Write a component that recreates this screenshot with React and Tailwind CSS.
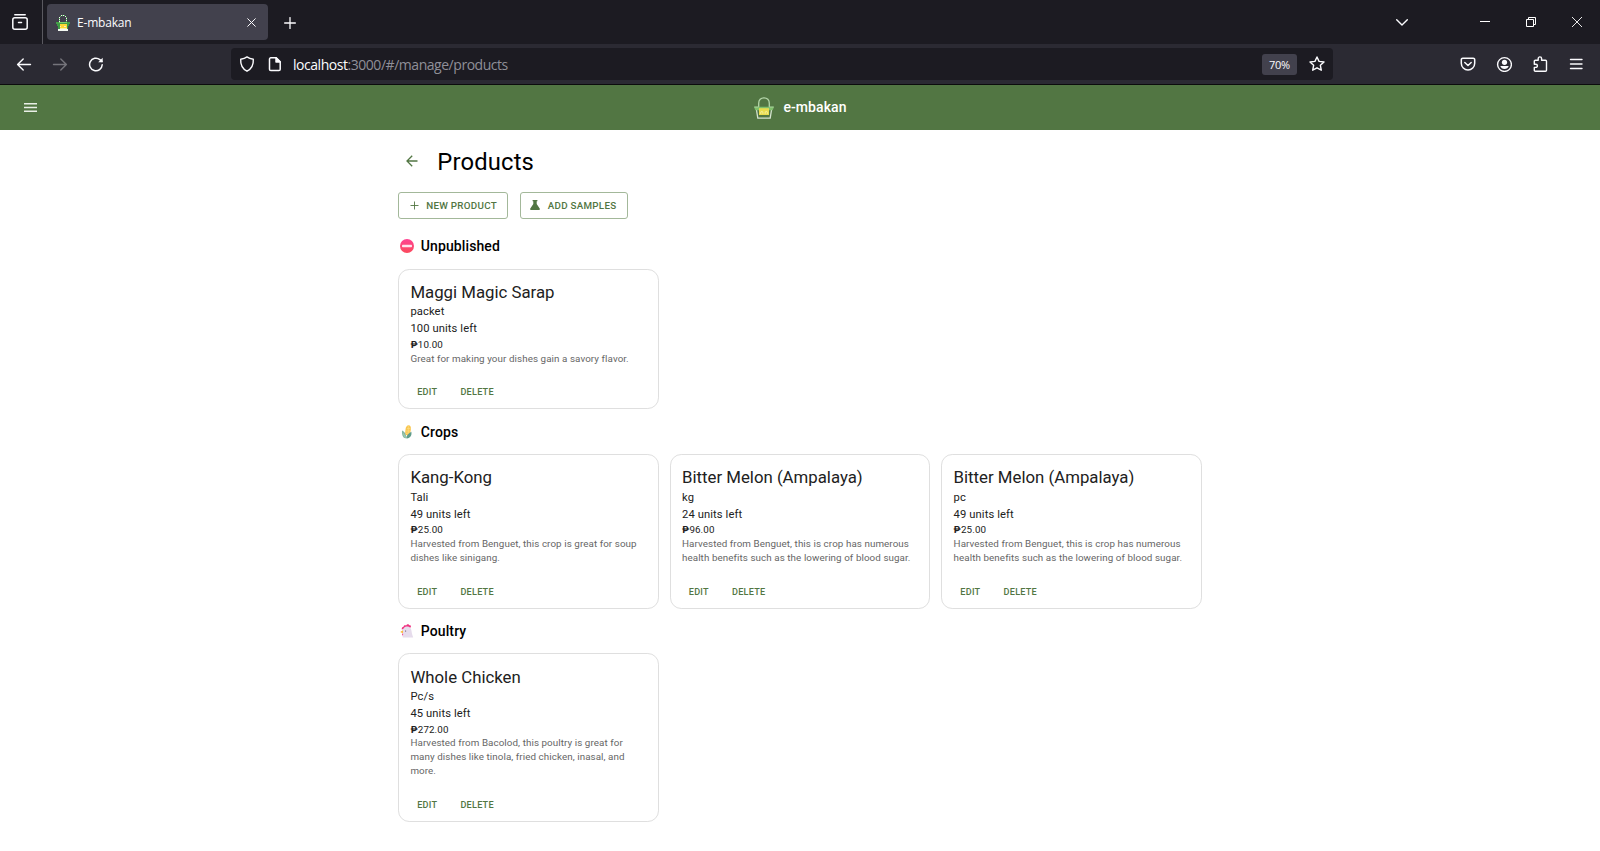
import React from "react";

const CHROME_FONT = "font-['Open_Sans','Noto_Sans',sans-serif]";

function Icon({ className = "size-4", children, strokeWidth = 1.4, viewBox = "0 0 16 16" }) {
  return (
    <svg
      className={`shrink-0 ${className}`}
      viewBox={viewBox}
      fill="none"
      stroke="currentColor"
      strokeWidth={strokeWidth}
      strokeLinecap="round"
      strokeLinejoin="round"
    >
      {children}
    </svg>
  );
}

function Favicon() {
  return (
    <svg className="h-[17px] w-4 shrink-0" viewBox="0 0 16 17" shapeRendering="crispEdges">
      <path
        d="M6 1h1v1H6zM8 1h1v1H8zM10 2h1v1h-1zM4 3h1v1H4zM11 4h1v1h-1zM4 5h1v1H4zM11 6h1v1h-1zM4 7h1v1H4z"
        fill="#f0f6ee"
      />
      <path
        d="M7 1h1v1H7zM9 1h1v1H9zM5 2h1v1H5zM11 3h1v1h-1zM4 4h1v1H4zM11 5h1v1h-1zM4 6h1v1H4zM11 7h1v1h-1z"
        fill="#4caf50"
      />
      <rect x="1" y="8" width="14" height="2" fill="#43a047" />
      <rect x="4" y="8" width="8" height="1" fill="#7ccf6d" />
      <rect x="2" y="10" width="12" height="2" fill="#3d9a44" />
      <rect x="3" y="12" width="10" height="3" fill="#3d9a44" />
      <rect x="5" y="10" width="7" height="4" fill="#fdd835" />
      <rect x="5" y="12" width="1" height="1" fill="#f6f1c0" />
      <rect x="9" y="12" width="2" height="1" fill="#f6f1c0" />
      <rect x="3" y="15" width="10" height="2" fill="#f4f8f2" />
      <rect x="5" y="14" width="7" height="1" fill="#fff59d" />
    </svg>
  );
}

function BasketLogo() {
  return (
    <svg className="h-[22px] w-5 shrink-0" viewBox="0 0 20 22" fill="none">
      <path d="M4.700 10V6.200C4.700 2.800 6.800.9 10 .9s5.300 1.900 5.300 5.300V10" stroke="#b5d6aa" strokeWidth="1.300" />
      <path d="M2.500 13 3.800 21.200h12.400L17.500 13" fill="#527643" stroke="#d5e3cf" strokeWidth="1.300" />
      <path d="M0 9.700h20l-1.300 3.500H1.300z" fill="#7fbf6c" />
      <path d="M.3 10h4.200M15.500 10h4.200" stroke="#b9dcae" strokeWidth=".8" />
      <rect x="5" y="11.200" width="10" height="6.800" fill="#e9dc4e" />
      <path d="M6.700 16.800v-1.200a1.100 1.100 0 0 1 2.200 0v1.200M11.200 16.800v-1.200a1.100 1.100 0 0 1 2.200 0v1.200" stroke="#f8f2b4" strokeWidth=".8" />
    </svg>
  );
}

function NoEntry() {
  return (
    <svg className="size-[14px]" viewBox="0 0 14 14">
      <defs>
        <linearGradient id="ne" x1="0" y1="0" x2="0" y2="1">
          <stop offset="0" stopColor="#ff4392" />
          <stop offset="1" stopColor="#fb4a5c" />
        </linearGradient>
      </defs>
      <circle cx="7" cy="7" r="7" fill="url(#ne)" />
      <rect x="2" y="5.700" width="10" height="2.600" rx=".8" fill="#ffe3ee" />
    </svg>
  );
}

function Corn() {
  return (
    <svg className="size-[14px]" viewBox="0 0 14 14">
      <path d="M5.500 4.500C5.600 2 7 .4 8.600.3c1.700 0 2.500 1.600 2.300 3.600-.2 2.600-1.100 5.600-2.700 6.900L5 9.500z" fill="#f9c650" />
      <path d="M7 3.500h3.500M6 6h4.300M6 8.300h3.600M8.300.6v8" stroke="#fde08c" strokeWidth=".6" />
      <path d="M2 5.400c2 .6 3.300 2.500 3.800 4.600L7 13.300C3.800 13.600 1.600 11.400 2 5.400z" fill="#84b7a4" />
      <path d="M11.300 6.800c.8 3.500-.8 6.400-4.500 6.600-1-2 1.500-5 4.500-6.600z" fill="#5f9c8b" />
      <path d="M3.500 8.500c.4 2 1.300 3.400 2.800 4.300" stroke="#b7d9b0" strokeWidth=".7" fill="none" />
    </svg>
  );
}

function Chicken() {
  return (
    <svg className="size-[14px]" viewBox="0 0 14 14">
      <path d="M1.800 5.500C1.500 3 2.900 2.800 3.400 3 3.500 1.100 5.300.7 6.100 1.600 7-.1 9-.1 9.300 1.300c1.500-.3 2 1 1.300 2.300L6 4.500z" fill="#f0307f" />
      <path d="M2.600 8C2.500 4.500 4.600 2.600 7.200 2.600c3 0 4.100 2.400 4.400 5 .2 2.300.9 3.700 1.600 6H2.700c-.3-1.500.2-3.500-.1-5.600z" fill="#e6dcec" />
      <path d="M3 6.200.2 8l2.600 1.200z" fill="#fbb52c" />
      <path d="M2.600 9.300c.7.500.7 2 .1 2.200-.7-.1-.7-1.400-.1-2.200z" fill="#f0307f" />
      <circle cx="5.600" cy="7" r=".6" fill="#51405e" />
    </svg>
  );
}

function TabStrip() {
  return (
    <div className="flex h-11 items-center bg-[#1c1b22] text-[#fbfbfe]">
      <div className="flex h-11 w-[43px] shrink-0 items-center border-r border-[#5a5960] pl-3">
        <Icon strokeWidth={1.5} className="size-4">
          <path d="M2.800.8h10.400" />
          <rect x=".8" y="3.800" width="14.400" height="11.400" rx="2" />
          <path d="M6.500 8.500h3" />
        </Icon>
      </div>
      <div className="ml-1 flex h-9 w-[221px] shrink-0 items-center rounded bg-[#42414d] pl-2 pr-3">
        <Favicon />
        <span className="ml-[6px] flex-1 pt-[2px] text-[12px] leading-4 tracking-[-0.015em]">E-mbakan</span>
        <Icon className="size-[9px]" viewBox="0 0 9 9" strokeWidth={1}>
          <path d="m.7.7 7.600 7.600M8.300.7.700 8.300" />
        </Icon>
      </div>
      <Icon className="ml-4 mt-px size-3" viewBox="0 0 12 12" strokeWidth={1.3}>
        <path d="M6 .6v10.800M.6 6h10.800" />
      </Icon>
      <div className="ml-auto flex items-center pr-[18px]">
        <Icon className="mr-[72px] h-[7px] w-3" viewBox="0 0 12 7" strokeWidth={1.4}>
          <path d="m.7.8 5.300 5.200L11.300.8" />
        </Icon>
        <div className="mb-px mr-9 h-px w-[10px] bg-white" />
        <svg className="mr-9 size-[10px]" viewBox="0 0 10 10" fill="none" stroke="#fff">
          <path d="M.5 2.500h7v7h-7zM2.500 2.500v-2h7v7h-2" />
        </svg>
        <svg className="size-[10px]" viewBox="0 0 10 10" fill="none" stroke="#fff" strokeWidth=".9">
          <path d="m0 0 10 10M10 0 0 10" />
        </svg>
      </div>
    </div>
  );
}

function Toolbar() {
  return (
    <div className="flex h-[41px] items-center border-b border-[#0c0c0d] bg-[#2b2a33] text-[#fbfbfe]">
      <Icon className="ml-4 size-4 text-[#fbfbfe]">
        <path d="M14.500 8.500H1.600M7.200 2.900 1.600 8.500l5.600 5.600" />
      </Icon>
      <Icon className="ml-5 size-4 text-[#75747b]">
        <path d="M1.500 8.500h12.900M8.800 2.900l5.600 5.600-5.600 5.600" />
      </Icon>
      <Icon className="ml-5 size-4" strokeWidth={1.5}>
        <path d="M14.200 8.800a6.300 6.300 0 1 1-2.300-5.200l2 1.800" />
        <path d="M14.700 1.800v4.500h-4.500z" fill="currentColor" stroke="none" />
      </Icon>
      <div className="ml-[127px] flex h-8 w-[1102px] items-center rounded bg-[#1c1b22] pl-2">
        <Icon strokeWidth={1.4}>
          <path d="M8 .9c1.700 1.300 3.800 2 6.300 2.300.3 4.800-1.200 9.300-6.300 12C2.900 12.500 1.400 8 1.700 3.200 4.200 2.900 6.300 2.200 8 .9z" />
        </Icon>
        <Icon className="ml-3 size-4" strokeWidth={1.5}>
          <path d="M3.800 1.800h5.400l4 4v7.400a1.300 1.300 0 0 1-1.300 1.300H3.800a1.300 1.300 0 0 1-1.300-1.300V3.100a1.300 1.300 0 0 1 1.300-1.300z" />
          <path d="M9 1.800V6h4.200z" fill="currentColor" />
        </Icon>
        <div className="ml-[10px] pt-[2px] text-[14px] leading-5 tracking-[-0.033em]">
          localhost<span className="text-[#8f8f98]">:3000/#/manage/products</span>
        </div>
        <div className="ml-auto flex h-[21px] w-[35px] items-center justify-center rounded-[3px] bg-[#42414d] pt-[2px] text-[11px] tracking-[-0.02em]">
          70%
        </div>
        <Icon className="ml-3 mr-2 size-4">
          <path d="m8 1 2.050 4.400 4.950.6-3.650 3.300.95 4.900L8 11.800l-4.300 2.400.95-4.900L1 6l4.950-.6z" />
        </Icon>
      </div>
      <div className="ml-auto flex items-center gap-5 pr-4">
        <Icon strokeWidth={1.5}>
          <path d="M2.800 2.200h10.400a1.500 1.500 0 0 1 1.500 1.500v3.600a6.700 6.700 0 0 1-13.400 0V3.700a1.500 1.500 0 0 1 1.500-1.500z" />
          <path d="M4.800 6.500 8 9.500l3.200-3" />
        </Icon>
        <Icon strokeWidth={1.4}>
          <circle cx="8.500" cy="8.500" r="6.900" />
          <circle cx="8.500" cy="6.300" r="2.600" fill="currentColor" stroke="none" />
          <path d="M4.300 10h8.400c-.6 2-2.200 3-4.200 3s-3.600-1-4.200-3z" fill="currentColor" stroke="none" />
        </Icon>
        <Icon strokeWidth={1.4}>
          <path d="M2.300 5.200c0-.6.400-1 1-1h2.900V2.600a1.700 1.700 0 0 1 3.400 0v1.600h3.900c.6 0 1 .4 1 1v9c0 .6-.4 1-1 1H3.300c-.6 0-1-.4-1-1v-2.800h1.500a1.600 1.600 0 0 0 0-3.200H2.300z" />
        </Icon>
        <Icon strokeWidth={1.4}>
          <path d="M2.500 3.500h11.500M2.500 8h11.500M2.500 12.500h11.500" />
        </Icon>
      </div>
    </div>
  );
}

function OutlinedButton({ icon, children, className }) {
  return (
    <button
      className={`flex h-[27px] items-center rounded-[3px] border border-[#a3b89a] text-[9.8px] font-medium tracking-[0.028em] text-[#527643] ${className}`}
    >
      {icon}
      <span className="pt-px uppercase">{children}</span>
    </button>
  );
}

function ProductCard({ name, unit, stock, price, description }) {
  return (
    <article className="rounded-[11.2px] border border-[#dfdfdf] bg-white text-[#212121]">
      <div className="p-[11.2px] pb-[10.1px]">
        <h3 className="text-[16.8px] leading-[22.4px]">{name}</h3>
        <p className="pt-[1.1px] text-[11.2px] leading-[16.8px] tracking-[0.0094em]">{unit}</p>
        <p className="text-[11.2px] leading-[16.8px] tracking-[0.0094em]">{stock} units left</p>
        <p className="h-[13.8px] text-[9.8px] leading-[13.6px] tracking-[0.01em]">
          <span className="font-bold">₱</span>
          {price}
        </p>
        <p className="text-[9.8px] leading-[13.900px] tracking-[0.0085em] text-[#666]">{description}</p>
      </div>
      <div className="flex gap-[5.8px] p-[5.6px] text-[9.1px] font-medium leading-[20.3px] tracking-[0.028em] text-[#527643]">
        <button className="w-[44.8px] pt-px uppercase">Edit</button>
        <button className="px-[5px] pt-px uppercase">Delete</button>
      </div>
    </article>
  );
}

const sections = [
  {
    title: "Unpublished",
    icon: <NoEntry />,
    products: [
      {
        name: "Maggi Magic Sarap",
        unit: "packet",
        stock: 100,
        price: "10.00",
        description: "Great for making your dishes gain a savory flavor.",
      },
    ],
  },
  {
    title: "Crops",
    icon: <Corn />,
    products: [
      {
        name: "Kang-Kong",
        unit: "Tali",
        stock: 49,
        price: "25.00",
        description: "Harvested from Benguet, this crop is great for soup dishes like sinigang.",
      },
      {
        name: "Bitter Melon (Ampalaya)",
        unit: "kg",
        stock: 24,
        price: "96.00",
        description:
          "Harvested from Benguet, this is crop has numerous health benefits such as the lowering of blood sugar.",
      },
      {
        name: "Bitter Melon (Ampalaya)",
        unit: "pc",
        stock: 49,
        price: "25.00",
        description:
          "Harvested from Benguet, this is crop has numerous health benefits such as the lowering of blood sugar.",
      },
    ],
  },
  {
    title: "Poultry",
    icon: <Chicken />,
    products: [
      {
        name: "Whole Chicken",
        unit: "Pc/s",
        stock: 45,
        price: "272.00",
        description:
          "Harvested from Bacolod, this poultry is great for many dishes like tinola, fried chicken, inasal, and more.",
      },
    ],
  },
];

export default function App() {
  return (
    <div className="flex h-[851px] w-[1600px] flex-col overflow-hidden bg-white font-['Roboto',sans-serif] text-black">
      <div className={CHROME_FONT}>
        <TabStrip />
        <Toolbar />
      </div>

      <header className="grid h-[45px] shrink-0 grid-cols-[1fr_auto_1fr] items-center bg-[#527643] text-white">
        <svg className="ml-6 h-[9px] w-[13px]" viewBox="0 0 13 9" stroke="#e9efe7" strokeWidth="1.400">
          <path d="M0 .7h13M0 4.500h13M0 8.300h13" />
        </svg>
        <div className="flex items-center gap-[9px] pl-px">
          <BasketLogo />
          <span className="pb-[2px] text-[14px] font-medium leading-[22px] tracking-[0.0055em]">e-mbakan</span>
        </div>
      </header>

      <main className="mx-auto w-[803.6px]">
        <div className="flex h-[62px] items-center">
          <svg className="ml-[8.2px] size-3" viewBox="0 0 12 12" fill="none" stroke="#527643" strokeWidth="1.300">
            <path d="M11.500 6H1.200M6.200.800 1 6l5.200 5.200" />
          </svg>
          <h1 className="ml-[18.8px] pt-[3px] text-[23.8px] leading-[29.400px] tracking-[0.0074em]">Products</h1>
        </div>

        <div className="flex gap-3">
          <OutlinedButton
            className="w-[110px] pl-[11px]"
            icon={
              <svg className="mb-px mr-[7px] size-[9px]" viewBox="0 0 9 9" stroke="#527643" strokeWidth=".9">
                <path d="M4.500.5v8M.5 4.500h8" />
              </svg>
            }
          >
            New Product
          </OutlinedButton>
          <OutlinedButton
            className="w-[108px] pl-[9px]"
            icon={
              <svg className="mb-px mr-[7.500px] size-[10px]" viewBox="0 0 10 10" fill="#527643">
                <path d="M2.600 0h4.800v1.200H6.700v2.700l3 4.600C10.200 9.300 9.800 10 9 10H1C.2 10-.2 9.300.3 8.500l3-4.600V1.200h-.7z" />
              </svg>
            }
          >
            Add Samples
          </OutlinedButton>
        </div>

        <div className="mt-[16.2px] flex flex-col gap-[11.2px]">
          {sections.map((section) => (
            <section key={section.title}>
              <h2 className="flex h-[22.4px] items-center gap-[6.600px] pl-[2px] text-[14px] font-medium leading-[22.400px] tracking-[0.0075em]">
                {section.icon}
                {section.title}
              </h2>
              <div className="mt-[11.2px] grid grid-cols-3 gap-[11.2px]">
                {section.products.map((product, index) => (
                  <ProductCard key={index} {...product} />
                ))}
              </div>
            </section>
          ))}
        </div>
      </main>
    </div>
  );
}
